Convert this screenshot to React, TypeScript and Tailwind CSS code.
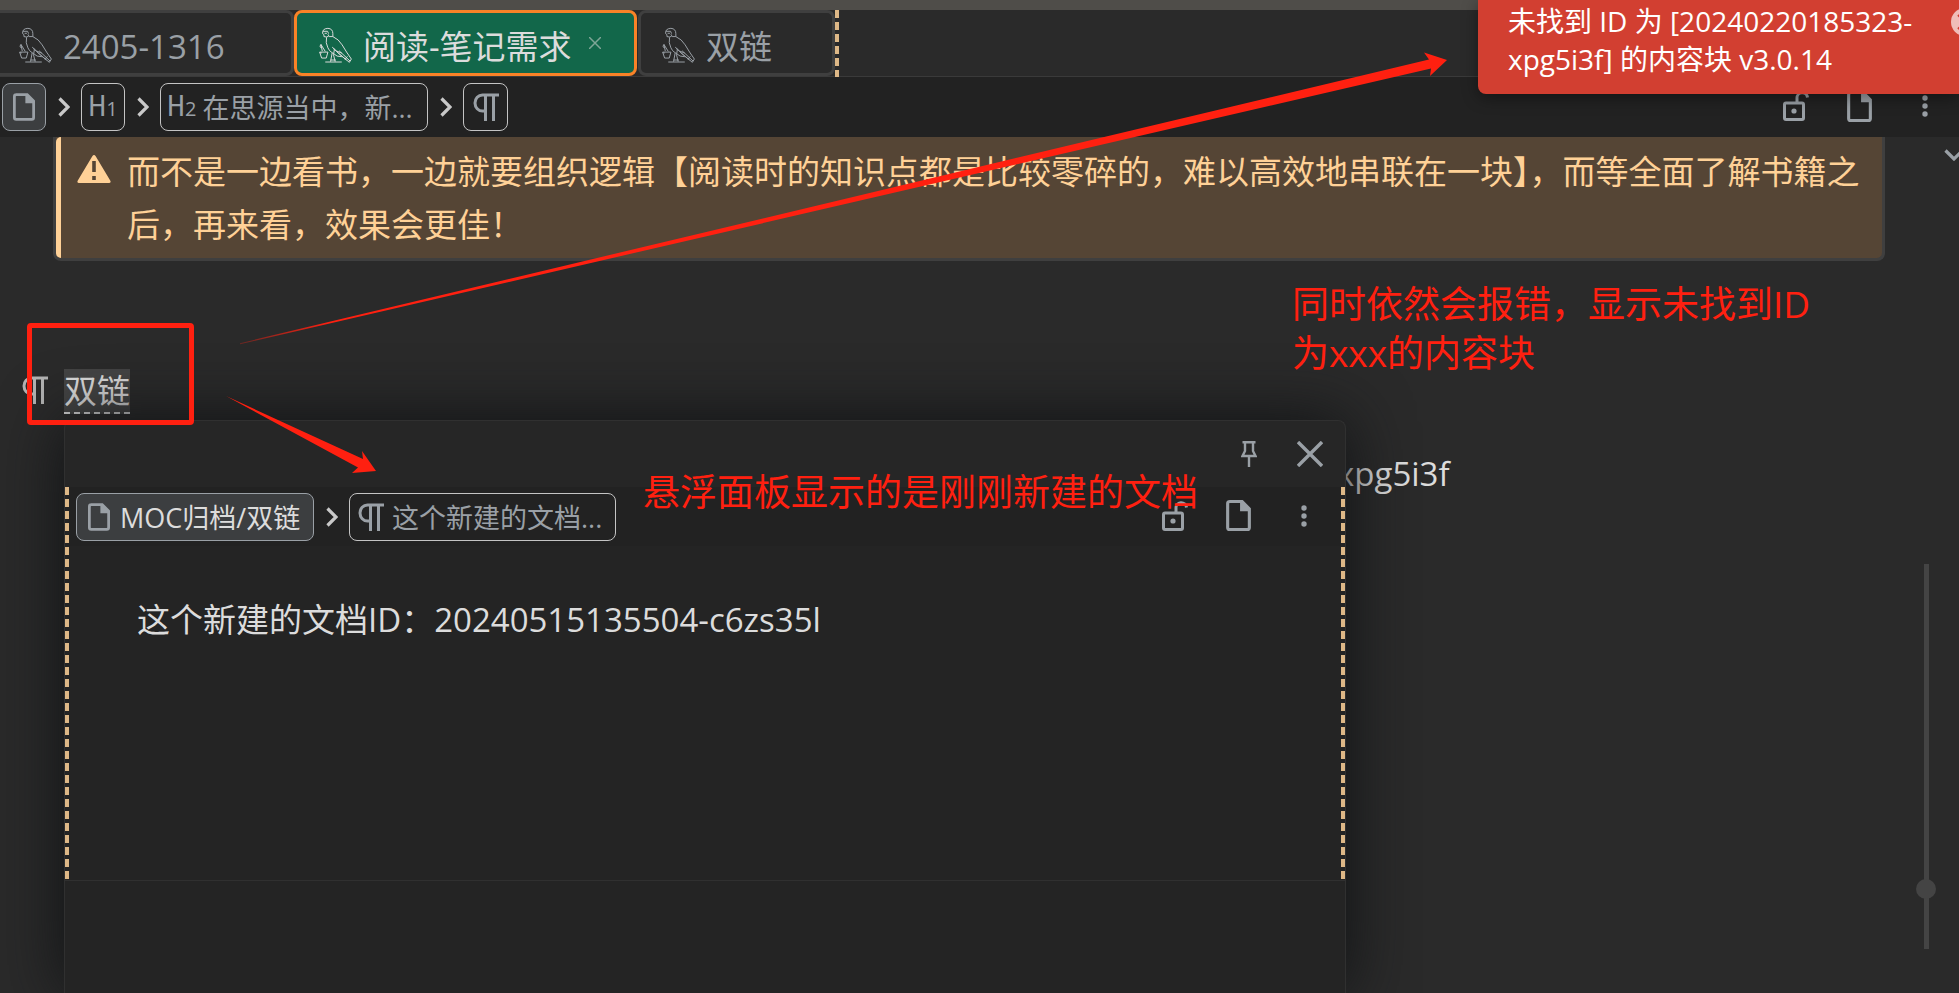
import type { ReactNode } from "react";

function FalconIcon() {
  return (
    <svg viewBox="54 84 106 112" className="h-[37px] w-[35px] shrink-0" fill="none" stroke="currentColor" strokeWidth="3" strokeLinejoin="round" aria-hidden="true">
      <path d="M68 104 Q66 89 84 88 Q99 89 99 104 V113 H88 L84 106" />
      <path d="M69 97 H83 L86 104 M74 103 H81 M68 104 L72 107 V113 Q80 116 86 112" />
      <path d="M80 115 Q76 132 84 147 Q88 157 97 162 L92 189" />
      <path d="M99 113 Q117 121 127 138 Q140 160 155 181 L149 191 Q122 169 100 149" />
      <path d="M97 145 Q110 160 126 163 M104 150 L101 168 L106 189 M112 160 L140 184 M118 156 L151 187 M97 162 L112 172 L126 174 M143 173 L136 182" />
      <path d="M76 190 H126 M92 184 H108" />
      <path d="M59 160 H84 L79 178 H65 Z M60 160 Q62 166 65 162" />
      <path d="M63 137 L76 158 M63 137 L67 157 M63 137 L60 142 L64 148" />
    </svg>
  );
}

function DocIcon({ className }: { className: string }) {
  return (
    <svg viewBox="0 0 24 30" className={className} aria-hidden="true">
      <path d="M3 1.5H15.5L22.5 8.500V26.500Q22.500 28.500 20.500 28.500H3.500Q1.500 28.500 1.500 26.500V3.500Q1.500 1.500 3.500 1.500Z" fill="none" stroke="currentColor" strokeWidth="3" />
      <path d="M13.500 1H16L23 8V11H13.500Z" fill="currentColor" />
    </svg>
  );
}

function PilcrowIcon() {
  return (
    <svg viewBox="0 0 26 28" className="h-7 w-[26px] shrink-0" stroke="currentColor" strokeWidth="3" fill="none" aria-hidden="true">
      <path d="M26 2H9.500a7.500 8 0 0 0 0 16H12M12.500 2V28M20.500 2V28" />
    </svg>
  );
}

function ChevronIcon({ className }: { className: string }) {
  return (
    <svg viewBox="0 0 12 20" className={className} fill="none" stroke="currentColor" strokeWidth="3.200" aria-hidden="true">
      <path d="M1.500 1.500L10 10L1.500 18.500" />
    </svg>
  );
}

function CrumbSeparator() {
  return <ChevronIcon className="mr-[11px] ml-3 h-5 w-3 text-[#c9c9c9]" />;
}

function UnlockIcon() {
  return (
    <svg viewBox="0 0 26 30" className="h-[30px] w-[26px]" fill="none" stroke="currentColor" strokeWidth="3" aria-hidden="true">
      <rect x="1.500" y="12" width="19" height="16.500" rx="1.500" />
      <path d="M14 12V7.500A5.200 5.200 0 0 1 24.500 6.500" />
      <circle cx="11" cy="20" r="2.600" fill="currentColor" stroke="none" />
    </svg>
  );
}

function DotsIcon() {
  return (
    <svg viewBox="0 0 6 22" className="h-[22px] w-[6px]" fill="currentColor" aria-hidden="true">
      <circle cx="3" cy="3" r="2.700" />
      <circle cx="3" cy="11" r="2.700" />
      <circle cx="3" cy="19" r="2.700" />
    </svg>
  );
}

function Heading({ level }: { level: number }) {
  return (
    <span className="flex items-baseline font-['Liberation_Sans_Narrow','Roboto_Condensed','Roboto','Open_Sans',sans-serif] text-[29px] leading-[34px]">
      H<span className="font-['Open_Sans',sans-serif] text-[20px]">{level}</span>
    </span>
  );
}

function Crumb({ children, className, label }: { children: ReactNode; className: string; label?: string }) {
  return (
    <button type="button" aria-label={label} className={`flex h-12 shrink-0 items-center rounded-lg border text-[27px] leading-9 whitespace-nowrap ${className}`}>
      {children}
    </button>
  );
}

function EditorActions() {
  return (
    <div className="ml-auto flex items-center pb-[2px] text-[#9aa0a6]">
      <button type="button" aria-label="Unlock" className="mr-[38px]"><UnlockIcon /></button>
      <button type="button" aria-label="Document" className="mr-[50px]"><DocIcon className="h-[31px] w-[25px]" /></button>
      <button type="button" aria-label="More"><DotsIcon /></button>
    </div>
  );
}

function TabLabel({ children }: { children: ReactNode }) {
  return (
    <>
      <FalconIcon />
      <span className="pt-1">{children}</span>
    </>
  );
}

function Tabs() {
  return (
    <div role="tablist" className="flex h-[67px] items-start border-b border-[#3a3a3a] text-[33px] leading-[44px] text-[#9aa0a6]">
      <button role="tab" type="button" aria-selected="false" className="flex h-[66px] w-[294px] items-center gap-[10px] rounded-r-lg border-3 border-l-0 border-[#3f3f3f] pt-1 pl-[18px]">
        <TabLabel>2405-1316</TabLabel>
      </button>
      <div className="flex h-[66px] w-[343px] items-center rounded-lg border-3 border-[#f98227] bg-[#12674a] pl-[21px] text-[#dcdcdc]">
        <button role="tab" type="button" aria-selected="true" className="flex items-center gap-[10px] pt-1 whitespace-nowrap">
          <TabLabel>阅读-笔记需求</TabLabel>
        </button>
        <button type="button" aria-label="Close tab" className="ml-[17px] text-[#7fa596]">
          <svg viewBox="0 0 12 12" className="size-3" stroke="currentColor" strokeWidth="1.500"><path d="M0 0L12 12M12 0L0 12" /></svg>
        </button>
      </div>
      <button role="tab" type="button" aria-selected="false" className="ml-px flex h-[66px] w-[197px] items-center gap-[10px] rounded-lg border-3 border-[#3f3f3f] pt-1 pl-5">
        <TabLabel>双链</TabLabel>
      </button>
      <div className="h-[67px] w-1 bg-[repeating-linear-gradient(to_bottom,#deb887_0_8px,transparent_8px_12px)]" />
    </div>
  );
}

function Popover() {
  return (
    <section className="absolute top-[420px] bottom-0 left-16 z-10 flex w-[1282px] flex-col rounded-t-lg border border-b-0 border-[#303030] bg-[#262626] shadow-[0_0_64px_#101214]">
      <header className="flex h-[66px] items-center justify-end gap-10 pr-[22px] text-[#9aa0a6]">
        <button type="button" aria-label="Pin">
          <svg viewBox="0 0 16 26" className="h-[26px] w-4" fill="none" stroke="currentColor" strokeWidth="2.400" aria-hidden="true">
            <path d="M1.500 1.200H14.500M4 1V10L1.500 15H14.500L12 10V1M8 15V26" />
          </svg>
        </button>
        <button type="button" aria-label="Close">
          <svg viewBox="0 0 26 26" className="size-[26px]" stroke="currentColor" strokeWidth="3.400" aria-hidden="true">
            <path d="M1 1L25 25M25 1L1 25" />
          </svg>
        </button>
      </header>
      <div className="flex h-[394px] border-b border-[#303030] bg-[#242424]">
        <div className="w-1 bg-[repeating-linear-gradient(to_bottom,#deb887_0_8px,transparent_8px_12px)]" />
        <div className="flex-1">
          <nav className="flex h-[59px] items-center bg-[#222222] pr-[34px] pl-[7px]">
            <Crumb className="w-[238px] gap-[10px] border-[#9aa0a6] bg-[#3c3e40] pl-[11px] text-[#dcdcdc]">
              <DocIcon className="h-7 w-[22px] text-[#9aa0a6]" /><span className="pt-[2px]">MOC归档/双链</span>
            </Crumb>
            <CrumbSeparator />
            <Crumb className="w-[267px] gap-2 border-[#c4c4c4] pl-2 text-[#9aa0a6]">
              <PilcrowIcon /><span className="pt-[2px]">这个新建的文档...</span>
            </Crumb>
            <EditorActions />
          </nav>
          <p className="pt-[47px] pl-[68px] text-[33px] leading-[53px] text-[#dcdcdc]">这个新建的文档ID：20240515135504-c6zs35l</p>
        </div>
        <div className="w-1 bg-[repeating-linear-gradient(to_bottom,#deb887_0_8px,transparent_8px_12px)]" />
      </div>
      <div className="flex-1 bg-[#242424]" />
    </section>
  );
}

function Toast() {
  return (
    <div role="alert" className="absolute top-0 right-0 z-20 flex h-[94px] w-[481px] overflow-hidden rounded-bl-lg bg-[#d23f31] pl-[30px] text-white shadow-[0_4px_16px_#00000066]">
      <p className="w-[443px] shrink-0 pt-[2px] text-[28px] leading-[38px]">
        未找到 ID 为 [20240220185323-<br />xpg5i3f] 的内容块 v3.0.14
      </p>
      <button type="button" aria-label="Dismiss" className="mt-2 size-7 shrink-0 rounded-full bg-[#f0bdb8] text-[#d23f31]">
        <svg viewBox="0 0 28 28" className="size-7" stroke="currentColor" strokeWidth="2"><path d="M7 7L21 21M21 7L7 21" /></svg>
      </button>
    </div>
  );
}

function Annotations() {
  return (
    <div className="pointer-events-none absolute inset-0 z-30 overflow-hidden text-[37px] leading-[49px] text-[#ff2010]">
      <div className="absolute top-[323px] left-[27px] h-[102px] w-[167px] rounded-[4px] border-5 border-[#ff2010]" />
      <svg className="absolute top-0 left-0 h-[500px] w-[1460px]" viewBox="0 0 1460 500" aria-hidden="true">
        <defs>
          <linearGradient id="fade" gradientUnits="userSpaceOnUse" x1="240" y1="0" x2="330" y2="0">
            <stop offset="0" stopColor="#ff2010" stopOpacity="0.300" />
            <stop offset="1" stopColor="#ff2010" />
          </linearGradient>
        </defs>
        <path d="M240 343.200L1429 59.500L1424 52.500L1447 60L1430 76L1431 68.500L240 344.200Z" fill="url(#fade)" />
        <path d="M226 396L363 459L362 451L376 471L352 473L358 467.500Z" fill="#ff2010" />
      </svg>
      <p className="absolute top-[467px] left-[643px] whitespace-nowrap">悬浮面板显示的是刚刚新建的文档</p>
      <p className="absolute top-[279px] left-[1292px] whitespace-nowrap">同时依然会报错，显示未找到ID<br />为xxx的内容块</p>
    </div>
  );
}

export default function App() {
  return (
    <div lang="zh-CN" className="relative flex min-h-screen flex-col overflow-hidden bg-[#2a2a2a] font-['Open_Sans','Noto_Sans_CJK_SC',sans-serif]">
      <div className="h-[10px] bg-[#4f4d49]" />
      <Tabs />
      <nav className="flex h-[60px] items-center bg-[#222222] pr-[31px] pl-[2px]">
        <Crumb label="Document" className="w-11 justify-center border-[#9aa0a6] bg-[#3c3e40] text-[#9aa0a6]">
          <DocIcon className="h-7 w-[22px]" />
        </Crumb>
        <CrumbSeparator />
        <Crumb className="w-11 justify-center border-[#c4c4c4] text-[#9aa0a6]"><Heading level={1} /></Crumb>
        <CrumbSeparator />
        <Crumb className="w-[268px] gap-[6px] border-[#c4c4c4] pl-[6px] text-[#9aa0a6]">
          <Heading level={2} /><span className="pt-[2px]">在思源当中，新...</span>
        </Crumb>
        <CrumbSeparator />
        <Crumb label="Paragraph" className="w-[45px] justify-center border-[#c4c4c4] text-[#9aa0a6]"><PilcrowIcon /></Crumb>
        <EditorActions />
      </nav>
      <div className="flex flex-1">
        <main className="flex-1 text-[33px] leading-[53px] text-[#dcdcdc]">
          <div className="ml-[53px] flex rounded-b-lg border-3 border-t-0 border-[#3f3f3f] bg-[#554535] text-[#ffd197]">
            <div className="w-[5px] shrink-0 rounded-l-lg bg-[#ffd197]" />
            <svg viewBox="0 0 34 28" className="mt-[18px] ml-4 h-7 w-[34px] shrink-0" fill="currentColor" fillRule="evenodd" aria-hidden="true">
              <path d="M15.300 1.200Q17 -1.200 18.700 1.200L33.500 26Q34 28 32 28H2Q0 28 0.500 26ZM15.200 6V17H18.800V6ZM15.200 21V25H18.800V21Z" />
            </svg>
            <p className="ml-4 pt-2 pb-[7px]">而不是一边看书，一边就要组织逻辑【阅读时的知识点都是比较零碎的，难以高效地串联在一块】，而等全面了解书籍之后，再来看，效果会更佳！</p>
          </div>
          <div className="mt-[108px] flex items-center gap-4 pl-[22px]">
            <span className="pb-1 text-[#b4b4b4]"><PilcrowIcon /></span>
            <a href="#block" className="border-b-2 border-dashed border-[#dcdcdc] bg-[#444444] leading-[43px]">双链</a>
          </div>
          <p className="mt-[33px] pl-[1337px]">xpg5i3f</p>
        </main>
        <aside className="flex w-[74px] flex-col overflow-hidden">
          <button type="button" aria-label="Collapse" className="mt-2 ml-[63px] w-3 text-[#9aa0a6]">
            <ChevronIcon className="h-5 w-3 rotate-90" />
          </button>
          <input
            type="range"
            aria-label="Scroll position"
            min={0}
            max={1000}
            defaultValue={863}
            className="mt-auto mb-11 ml-[31px] h-[385px] w-5 appearance-none bg-transparent [writing-mode:vertical-lr] [&::-webkit-slider-runnable-track]:h-full [&::-webkit-slider-runnable-track]:w-[5px] [&::-webkit-slider-runnable-track]:bg-[#444444] [&::-webkit-slider-thumb]:-ml-2 [&::-webkit-slider-thumb]:size-5 [&::-webkit-slider-thumb]:appearance-none [&::-webkit-slider-thumb]:rounded-full [&::-webkit-slider-thumb]:bg-[#444444]"
          />
        </aside>
      </div>
      <Popover />
      <Toast />
      <Annotations />
    </div>
  );
}
